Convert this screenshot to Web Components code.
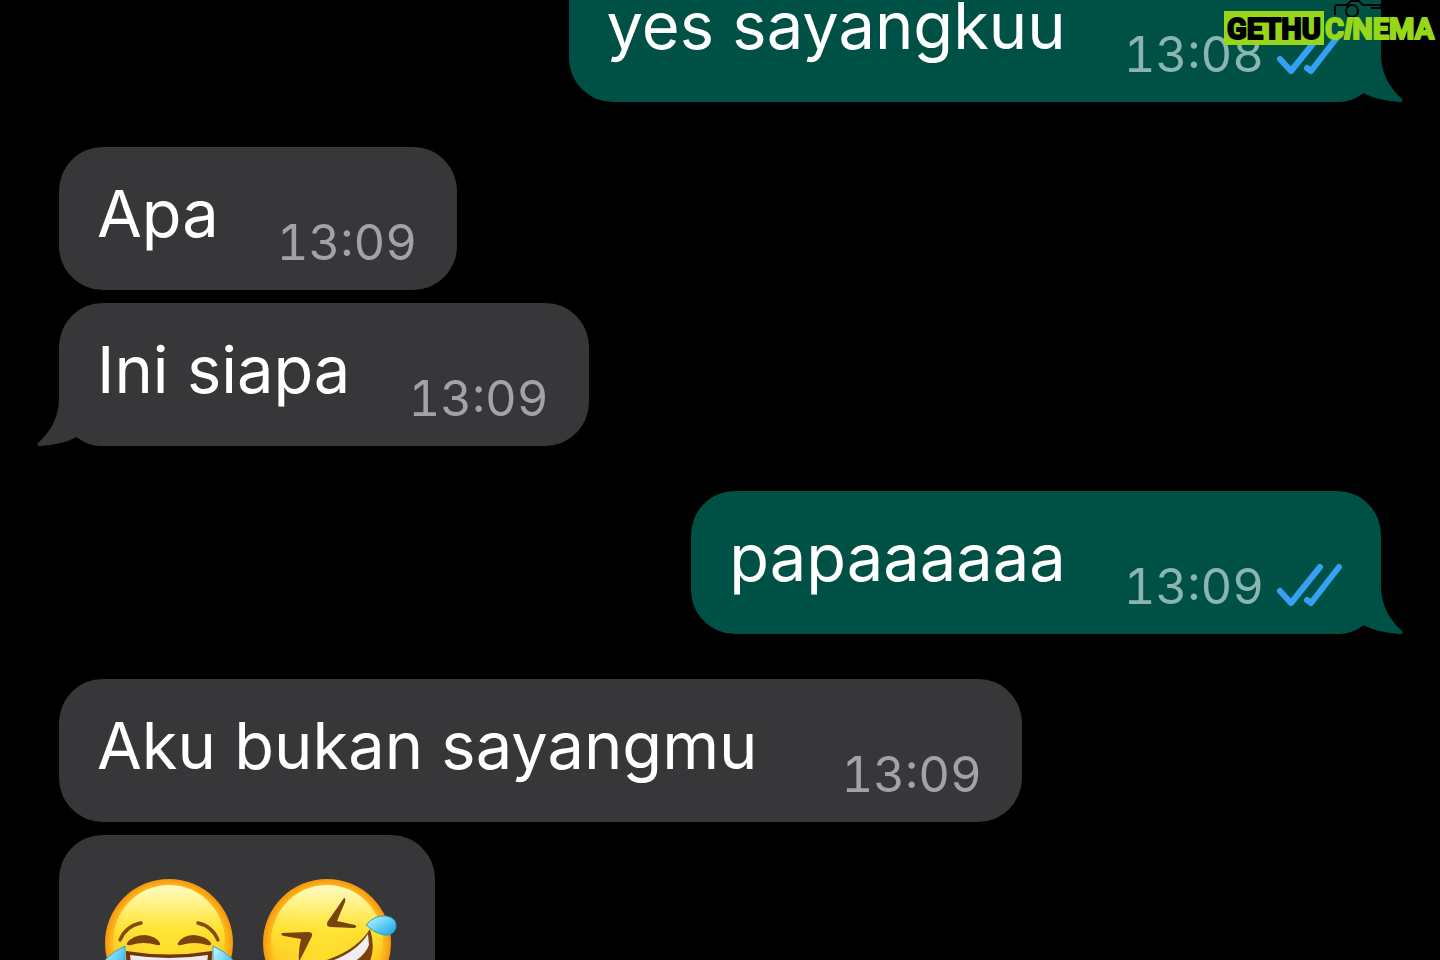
<!DOCTYPE html>
<html lang="id">
<head>
<meta charset="utf-8">
<meta name="viewport" content="width=device-width, initial-scale=1">
<title>Chat</title>
<style>
  body { margin: 0; background: #000; }
</style>
</head>
<body>
<chat-thread>
  <chat-message out tail time="13:08">yes sayangkuu</chat-message>
  <chat-message time="13:09">Apa</chat-message>
  <chat-message tail time="13:09" joined>Ini siapa</chat-message>
  <chat-message out tail time="13:09">papaaaaaa</chat-message>
  <chat-message time="13:09" wide>Aku bukan sayangmu</chat-message>
  <chat-message joined emoji><emoji-face kind="joy"></emoji-face><emoji-face kind="rofl"></emoji-face></chat-message>
</chat-thread>
<brand-mark></brand-mark>

<script>
class ChatThread extends HTMLElement {
  constructor() {
    super();
    this.attachShadow({ mode: "open" });

    this.shadowRoot.innerHTML = `
      <style>
        :host {
          display: block;
          height: 100vh;
          overflow: hidden;
          background: #000;
          color: #fff;
          font-family: Inter, "Liberation Sans", sans-serif;
        }
        /* the first message is scrolled partly out of view */
        main {
          display: flex;
          flex-direction: column;
          gap: 45px;
          margin-top: -41px;
          padding: 0 59px;
        }
      </style>
      <main><slot></slot></main>
    `;
  }
}

class ChatMessage extends HTMLElement {
  constructor() {
    super();
    this.attachShadow({ mode: "open" });

    this.shadowRoot.innerHTML = `
      <style>
        :host { display: flex; --bubble: #373739; --meta: #a3a1aa; }
        :host([out]) { justify-content: flex-end; --bubble: #005145; --meta: #8ab5b1; }
        :host([joined]) { margin-top: -32px; }

        .bubble {
          position: relative;
          isolation: isolate;
          display: flex;
          gap: 58px;
          padding: 0 40px 0 38px;
          border-radius: 44px;
          background: var(--bubble);
        }
        :host([out]) .bubble, :host([emoji]) .bubble { padding-right: 38px; }
        :host([wide]) .bubble { gap: 84px; }

        .text { padding: 25px 0 34px; font-size: 65px; line-height: 84px; white-space: nowrap; }
        :host([emoji]) .text { display: flex; gap: 16px; padding: 37px 0; }

        .meta {
          display: flex;
          gap: 12px;
          align-self: flex-end;
          padding-bottom: 17px;
          color: var(--meta);
          font-size: 49px;
          line-height: 60px;
          font-variant-numeric: tabular-nums;
        }

        .ticks { flex: none; width: 67px; height: 44px; margin-top: 6px; }
        .ticks path { fill: none; stroke: #35a0f4; stroke-width: 6; stroke-linecap: round; stroke-linejoin: round; }

        .tail { position: absolute; z-index: -1; bottom: 0; left: -22px; width: 66px; height: 80px; fill: var(--bubble); }
        :host([out]) .tail { left: auto; right: -22px; transform: scaleX(-1); }

        [hidden] { display: none; }
      </style>

      <div class="bubble">
        <svg class="tail" viewBox="0 0 66 80" aria-hidden="true"><path d="M22 0V32C22 51 14 65 1 77Q-1 80 3 80Q24 79 40 71Q50 80 66 80V0Z"/></svg>
        <div class="text"><slot></slot></div>
        <div class="meta">
          <time></time>
          <svg class="ticks" viewBox="0 0 67 44" role="img" aria-label="Dibaca"><path d="M4 28L15 40L44 4M31 37L35 40L63 4"/></svg>
        </div>
      </div>
    `;
  }

  connectedCallback() {
    const time = this.getAttribute("time");
    this.shadowRoot.querySelector("time").textContent = time || "";
    this.shadowRoot.querySelector(".tail").toggleAttribute("hidden", !this.hasAttribute("tail"));
    this.shadowRoot.querySelector(".ticks").toggleAttribute("hidden", !this.hasAttribute("out"));

    // without a time nothing may sit beside the text
    if (!time) this.shadowRoot.querySelector(".meta").style.display = "none";
  }
}

const FACES = {
  joy: `
    <g fill="none" stroke="#85490b" stroke-width="3.4" stroke-linecap="round">
      <path d="M23 68Q29 54 44 51"/><path d="M101 51Q115 54 121 68"/>
    </g>
    <g fill="#7a430d">
      <path d="M30 71Q36 63 48 63Q59 64 63 71Q64 74 60 73Q46 69 34 73Q29 74 30 71Z"/>
      <path d="M81 71Q86 63 97 63Q109 64 114 71Q115 74 110 73Q98 69 84 73Q80 74 81 71Z"/>
    </g>
    <path d="M29 79Q72 86 115 79Q116 123 72 124Q28 123 29 79Z" fill="#71350b"/>
    <path d="M33 83Q72 89 111 83L109 99Q72 104 35 99Z" fill="#eee9ed"/>
    <path d="M28 74Q17 79 9 87Q-1 101 10 108Q27 112 28 91Z" fill="url(#tear)" stroke="#25a5dc"/>
    <path d="M116 74Q127 79 135 87Q145 101 134 108Q117 112 116 91Z" fill="url(#tear)" stroke="#25a5dc"/>
  `,
  rofl: `
    <g fill="#7a430d">
      <path d="M89 26Q91 26 90 30L82 49L100 53Q103 55 99 56L75 55Q70 54 73 49Z"/>
      <path d="M27 61Q25 63 29 64L46 67Q43 78 44 90L57 64Q58 60 53 60Z"/>
    </g>
    <path d="M115 57Q103 76 77 86Q59 93 45 95Q60 124 88 114Q127 96 115 57Z" fill="#7a430d"/>
    <path d="M113 62Q102 79 79 88L52 97Q60 106 76 99Q107 91 114 73Z" fill="#f1edf1"/>
    <path d="M111 53Q119 43 131 44Q142 46 141 55Q139 64 129 63Q119 61 111 53Z" fill="url(#tear)" stroke="#249fd2"/>
  `
};

class EmojiFace extends HTMLElement {
  constructor() {
    super();
    this.attachShadow({ mode: "open" });
  }

  connectedCallback() {
    const kind = this.getAttribute("kind");
    this.shadowRoot.innerHTML = `
      <style>
        :host { display: block; width: 142px; height: 142px; }
        svg { display: block; width: 100%; height: 100%; overflow: visible; }
      </style>
      <svg viewBox="0 0 142 142" role="img" aria-label="${kind}">
        <defs>
          <radialGradient id="rim">
            <stop offset="0" stop-color="#ffe32e"/>
            <stop offset=".8" stop-color="#ffcd24"/>
            <stop offset=".9" stop-color="#fdb51c"/>
            <stop offset="1" stop-color="#f6970c"/>
          </radialGradient>
          <linearGradient id="skin" x1="0" y1="0" x2="0" y2="1">
            <stop offset="0" stop-color="#fffbc4"/>
            <stop offset=".2" stop-color="#fff078"/>
            <stop offset=".4" stop-color="#ffe636" stop-opacity=".8"/>
            <stop offset=".7" stop-color="#ffd62b" stop-opacity="0"/>
          </linearGradient>
          <linearGradient id="tear" x1="0" y1="0" x2="1" y2="1">
            <stop offset="0" stop-color="#d3f6ff"/>
            <stop offset=".45" stop-color="#6ed3f7"/>
            <stop offset="1" stop-color="#179fe0"/>
          </linearGradient>
        </defs>
        <circle cx="72" cy="71" r="64" fill="url(#rim)"/>
        <ellipse cx="72" cy="70" rx="56" ry="57" fill="url(#skin)"/>
        ${FACES[kind] || ""}
      </svg>
    `;
  }
}

class BrandMark extends HTMLElement {
  constructor() {
    super();
    this.attachShadow({ mode: "open" });

    this.shadowRoot.innerHTML = `
      <style>
        /* lies over the thread, in the top right corner */
        :host { position: absolute; top: 0; right: 0; width: 220px; height: 50px; }
        svg { display: block; width: 100%; height: 100%; }
        text { font: 700 29px Roboto, sans-serif; stroke-width: 2; stroke-linejoin: round; }
        .camera { fill: none; stroke: #000; stroke-width: 2; }
      </style>
      <svg viewBox="0 0 220 50">
        <g class="camera">
          <path d="M115 15V7Q115 5 118 5H127L131 1H139L143 5H162"/>
          <circle cx="132" cy="11" r="6"/>
          <path d="M151 8H162"/>
        </g>
        <path d="M4 11H104V45H4Z" fill="#96d719"/>
        <text x="7" y="39" fill="#000" stroke="#000">GETHU</text>
        <text x="105" y="39" fill="#96d719" stroke="#96d719">C<tspan font-style="italic">I</tspan>NEMA</text>
      </svg>
    `;
  }
}

customElements.define("chat-thread", ChatThread);
customElements.define("chat-message", ChatMessage);
customElements.define("emoji-face", EmojiFace);
customElements.define("brand-mark", BrandMark);
</script>
</body>
</html>
